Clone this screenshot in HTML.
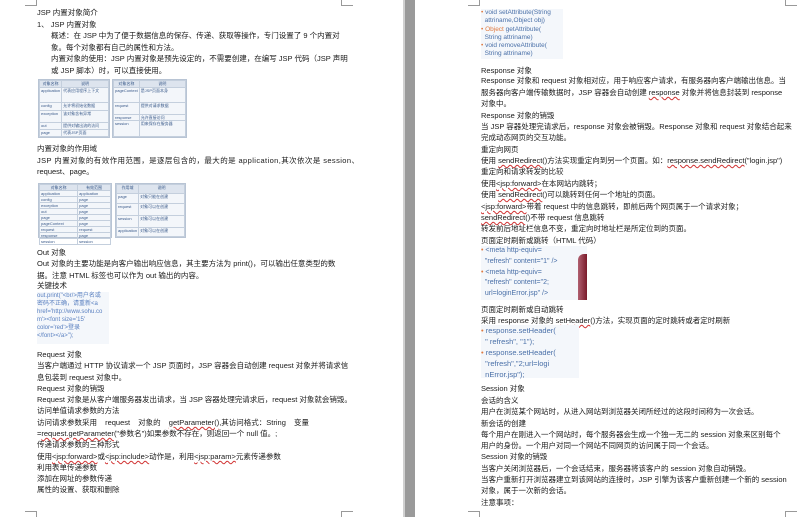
<!DOCTYPE html>
<html><head><meta charset="utf-8"><style>
*{margin:0;padding:0;box-sizing:border-box}
body{width:802px;height:517px;background:#fff;position:relative;overflow:hidden;font-family:"Liberation Sans","Noto Sans CJK SC",sans-serif;color:#1a1a1a}
.l{position:absolute;font-size:7.5px;line-height:10px;white-space:nowrap}
.gray{position:absolute;left:405px;top:0;width:10px;height:517px;background:#9a9a9a}
.gray2{position:absolute;left:403px;top:0;width:2px;height:517px;background:#d0d0d0}
.cm{position:absolute;width:12px;height:6px}
.tb{position:absolute;border:1px solid #b8c4d4;background:#f3f6fa}
.tb table{border-collapse:collapse;width:100%;height:100%}
.tb td{border:1px solid #c4cfdd;font-size:4px;line-height:5px;color:#3a5a8a;padding:0 1px;vertical-align:top}
.tb tr:first-child td{background:#dde4ee;text-align:center}
.code{position:absolute;background:#f4f7fb;font-family:"Liberation Sans",sans-serif;color:#4a70a8}
.code div{white-space:nowrap}
.o{color:#e07a40}
.u{text-decoration:underline wavy #d03030;text-decoration-thickness:1px}
</style></head><body>
<div class="gray2"></div><div class="gray"></div>
<div class="cm" style="left:25px;top:0;border-right:1px solid #999;border-bottom:1px solid #999"></div>
<div class="cm" style="left:341px;top:0;border-left:1px solid #999;border-bottom:1px solid #999"></div>
<div class="cm" style="left:25px;top:511px;border-right:1px solid #999;border-top:1px solid #999"></div>
<div class="cm" style="left:341px;top:511px;border-left:1px solid #999;border-top:1px solid #999"></div>
<div class="cm" style="left:468px;top:0;border-right:1px solid #999;border-bottom:1px solid #999"></div>
<div class="cm" style="left:785px;top:0;border-left:1px solid #999;border-bottom:1px solid #999"></div>
<div class="cm" style="left:468px;top:511px;border-right:1px solid #999;border-top:1px solid #999"></div>
<div class="cm" style="left:785px;top:511px;border-left:1px solid #999;border-top:1px solid #999"></div>

<!-- left page -->
<div class="l" style="left:37px;top:8px">JSP 内置对象简介</div>
<div class="l" style="left:37px;top:20px">1、 JSP 内置对象</div>
<div class="l" style="left:51px;top:31px">概述：在 JSP 中为了便于数据信息的保存、传递、获取等操作，专门设置了 9 个内置对</div>
<div class="l" style="left:51px;top:43px">象。每个对象都有自己的属性和方法。</div>
<div class="l" style="left:51px;top:54px">内置对象的使用：JSP 内置对象是预先设定的，不需要创建，在编写 JSP 代码（JSP 声明</div>
<div class="l" style="left:51px;top:66px">或 JSP 脚本）时，可以直接使用。</div>

<div class="tb" style="left:38px;top:79px;width:72px;height:59px"><table>
<tr><td style="width:20px">对象名称</td><td>说明</td></tr>
<tr style="height:15px"><td>application</td><td>代表应用程序上下文</td></tr>
<tr><td>config</td><td>允许将初始化数据</td></tr>
<tr style="height:12px"><td>exception</td><td>该对象含有异常</td></tr>
<tr><td>out</td><td>提供对输出流的访问</td></tr>
<tr><td>page</td><td>代表JSP页面</td></tr></table></div>
<div class="tb" style="left:112px;top:79px;width:75px;height:59px"><table>
<tr><td style="width:18px">对象名称</td><td>说明</td></tr>
<tr style="height:15px"><td>pageContext</td><td>是JSP页面本身</td></tr>
<tr style="height:12px"><td>request</td><td>提供对请求数据</td></tr>
<tr><td>response</td><td>允许直接访问</td></tr>
<tr style="height:16px"><td>session</td><td>用来保存在服务器</td></tr></table></div>

<div class="l" style="left:37px;top:144px">内置对象的作用域</div>
<div class="l" style="left:37px;top:156px;letter-spacing:0.4px">JSP 内置对象的有效作用范围，是逐层包含的，最大的是 application,其次依次是 session、</div>
<div class="l" style="left:37px;top:167px">request、page。</div>

<div class="tb" style="left:38px;top:183px;width:74px;height:55px"><table>
<tr><td>对象名称</td><td>有效范围</td></tr>
<tr><td>application</td><td>application</td></tr><tr><td>config</td><td>page</td></tr><tr><td>exception</td><td>page</td></tr><tr><td>out</td><td>page</td></tr><tr><td>page</td><td>page</td></tr><tr><td>pageContext</td><td>page</td></tr><tr><td>request</td><td>request</td></tr><tr><td>response</td><td>page</td></tr><tr><td>session</td><td>session</td></tr></table></div>
<div class="tb" style="left:115px;top:183px;width:71px;height:55px"><table>
<tr><td style="width:18px">作用域</td><td>说明</td></tr>
<tr style="height:10px"><td>page</td><td>对象只能在创建</td></tr>
<tr style="height:12px"><td>request</td><td>对象可以在创建</td></tr>
<tr style="height:12px"><td>session</td><td>对象可以在创建</td></tr>
<tr><td>application</td><td>对象可以在创建</td></tr></table></div>

<div class="l" style="left:37px;top:248px">Out 对象</div>
<div class="l" style="left:37px;top:259px">Out 对象的主要功能是向客户输出响应信息，其主要方法为 print()，可以输出任意类型的数</div>
<div class="l" style="left:37px;top:271px">据。注意 HTML 标签也可以作为 out 输出的内容。</div>
<div class="l" style="left:37px;top:281px">关键技术</div>
<div class="code" style="left:37px;top:292px;width:72px;height:52px;font-size:6px;line-height:8px;color:#5a80c0">
<div>out.print("&lt;br/&gt;用户名或</div><div>密码不正确，请重新&lt;a</div><div>href='http://www.sohu.co</div><div>m'&gt;&lt;font size='15'</div><div>color='red'&gt;登录</div><div>&lt;/font&gt;&lt;/a&gt;");</div></div>

<div class="l" style="left:37px;top:350px">Request 对象</div>
<div class="l" style="left:37px;top:361px">当客户端通过 HTTP 协议请求一个 JSP 页面时，JSP 容器会自动创建 request 对象并将请求信</div>
<div class="l" style="left:37px;top:373px">息包装到 request 对象中。</div>
<div class="l" style="left:37px;top:384px">Request 对象的销毁</div>
<div class="l" style="left:37px;top:395px">Request 对象是从客户端服务器发出请求，当 JSP 容器处理完请求后，request 对象就会销毁。</div>
<div class="l" style="left:37px;top:406px">访问单值请求参数的方法</div>
<div class="l" style="left:37px;top:418px;word-spacing:6px">访问请求参数采用 request 对象的 <span class="u">getParameter()</span>,其访问格式：String 变量</div>
<div class="l" style="left:37px;top:429px">=<span class="u">request.getParameter</span>("参数名")如果参数不存在，则返回一个 null 值。;</div>
<div class="l" style="left:37px;top:440px">传递请求参数的三种形式</div>
<div class="l" style="left:37px;top:452px">使用<span class="u">&lt;jsp:forward&gt;</span>或<span class="u">&lt;jsp:include&gt;</span>动作是，利用<span class="u">&lt;jsp:param&gt;</span>元素传递参数</div>
<div class="l" style="left:37px;top:463px">利用表单传递参数</div>
<div class="l" style="left:37px;top:474px">添加在网址的参数传递</div>
<div class="l" style="left:37px;top:485px">属性的设置、获取和删除</div>

<!-- right page -->
<div class="code" style="left:481px;top:9px;width:82px;height:50px;font-size:6.5px;line-height:8.3px">
<div><span class="o">•</span> void setAttribute(String</div><div>&nbsp; attriname,Object obj)</div><div><span class="o">• Object</span> getAttribute(</div><div>&nbsp; String attriname)</div><div><span class="o">•</span> void removeAttribute(</div><div>&nbsp; String attriname)</div></div>

<div class="l" style="left:481px;top:66px">Response 对象</div>
<div class="l" style="left:481px;top:76px">Response 对象和 request 对象相对应，用于响应客户请求，有服务器向客户端输出信息。当</div>
<div class="l" style="left:481px;top:88px">服务器向客户端传输数据时，JSP 容器会自动创建 <span class="u">response</span> 对象并将信息封装到 response</div>
<div class="l" style="left:481px;top:99px">对象中。</div>
<div class="l" style="left:481px;top:111px">Response 对象的销毁</div>
<div class="l" style="left:481px;top:122px">当 JSP 容器处理完请求后，response 对象会被销毁。Response 对象和 request 对象结合起来</div>
<div class="l" style="left:481px;top:133px">完成动态网页的交互功能。</div>
<div class="l" style="left:481px;top:145px">重定向网页</div>
<div class="l" style="left:481px;top:156px">使用 <span class="u">sendRedirect</span>()方法实现重定向到另一个页面。如：<span class="u">response.sendRedirect</span>("login.jsp")</div>
<div class="l" style="left:481px;top:167px">重定向和请求转发的比较</div>
<div class="l" style="left:481px;top:179px">使用<span class="u">&lt;jsp:forward&gt;</span>在本网站内跳转；</div>
<div class="l" style="left:481px;top:190px">使用 <span class="u">sendRedirect</span>()可以跳转到任何一个地址的页面。</div>
<div class="l" style="left:481px;top:202px"><span class="u">&lt;jsp:forward&gt;</span>带着 request 中的信息跳转，即前后两个网页属于一个请求对象；</div>
<div class="l" style="left:481px;top:213px"><span class="u">sendRedirect</span>()不带 request 信息跳转</div>
<div class="l" style="left:481px;top:224px">转发前后地址栏信息不变，重定向时地址栏是所定位到的页面。</div>
<div class="l" style="left:481px;top:236px">页面定时刷新或跳转（HTML 代码）</div>

<div class="code" style="left:481px;top:246px;width:106px;height:54px;font-size:7px;line-height:10.8px">
<div><span class="o">•</span> &lt;meta http-equiv=</div><div>&nbsp; "refresh" content="1" /&gt;</div><div><span class="o">•</span> &lt;meta http-equiv=</div><div>&nbsp; "refresh" content="2;</div><div>&nbsp; url=loginError.jsp" /&gt;</div>
<div style="position:absolute;left:97px;top:8px;width:9px;height:46px;background:linear-gradient(90deg,#b06070,#7a1a2a);border-radius:6px 0 0 0"></div></div>

<div class="l" style="left:481px;top:305px">页面定时刷新或自动跳转</div>
<div class="l" style="left:481px;top:316px">采用 response 对象的 <span class="u">setHeader</span>()方法，实现页面的定时跳转或者定时刷新</div>
<div class="code" style="left:481px;top:325px;width:98px;height:53px;font-size:7.5px;line-height:11px">
<div><span class="o">•</span> response.setHeader(</div><div>&nbsp; " refresh", "1");</div><div><span class="o">•</span> response.setHeader(</div><div>&nbsp; "refresh","2;url=logi</div><div>&nbsp; nError.jsp");</div></div>

<div class="l" style="left:481px;top:384px">Session 对象</div>
<div class="l" style="left:481px;top:396px">会话的含义</div>
<div class="l" style="left:481px;top:407px">用户在浏览某个网站时，从进入网站到浏览器关闭所经过的这段时间称为一次会话。</div>
<div class="l" style="left:481px;top:419px">新会话的创建</div>
<div class="l" style="left:481px;top:430px">每个用户在刚进入一个网站时，每个服务器会生成一个独一无二的 session 对象来区别每个</div>
<div class="l" style="left:481px;top:441px">用户的身份。一个用户对同一个网站不同网页的访问属于同一个会话。</div>
<div class="l" style="left:481px;top:452px">Session 对象的销毁</div>
<div class="l" style="left:481px;top:464px">当客户关闭浏览器后，一个会话结束，服务器将该客户的 session 对象自动销毁。</div>
<div class="l" style="left:481px;top:475px">当客户重新打开浏览器建立到该网站的连接时，JSP 引擎为该客户重新创建一个新的 session</div>
<div class="l" style="left:481px;top:486px">对象，属于一次新的会话。</div>
<div class="l" style="left:481px;top:498px">注意事项：</div>
</body></html>
